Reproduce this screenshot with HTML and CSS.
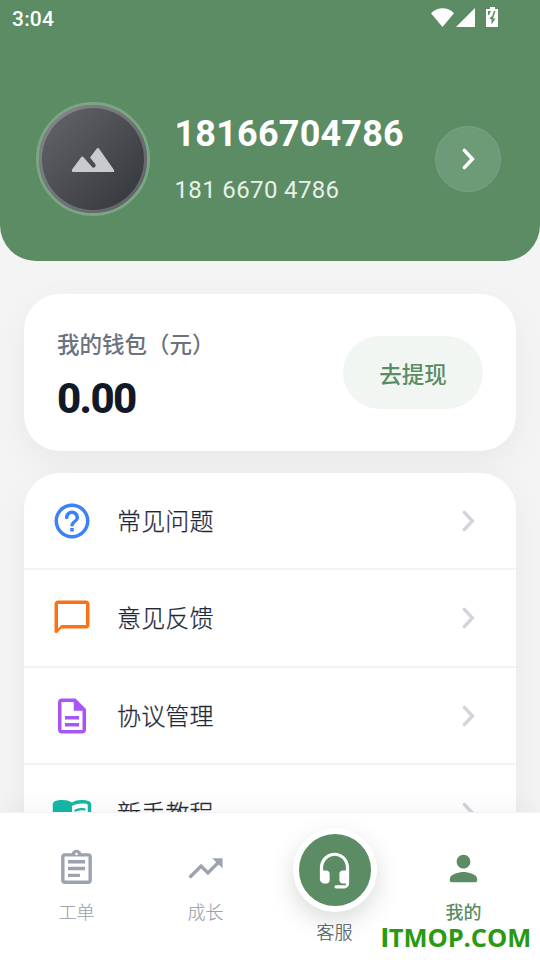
FILE: index.html
```html
<!DOCTYPE html>
<html lang="zh-CN">
<head>
<meta charset="utf-8">
<title>我的</title>
<link rel="stylesheet" href="styles.css">
</head>
<body>
<svg class="defs" width="0" height="0">
  <symbol id="chevron" viewBox="0 0 24 24"><path d="M9.900 7.100l4.600 4.900-4.600 4.900" fill="none" stroke="currentColor" stroke-width="2" stroke-linecap="round" stroke-linejoin="miter"/></symbol>
</svg>
<div class="screen">
  <header class="hero">
    <div class="status">
      <span class="time">3:04</span>
      <svg class="system" width="68" height="21" viewBox="0 0 68 21" fill="#fff">
        <path d="M0 6.2C6.5-.4 17-.4 23 6.2L11.500 20z"/>
        <path d="M44 1v19H25z"/>
        <path d="M59 0h5v2h3v18H55V2h4zM61.500 8.500l-3.500 3.500h2.500v5.500l4-6h-2.500l2.500-7.500h-1.500l-1.200 3zM57 4h3l-2 4h-1z" fill-rule="evenodd"/>
      </svg>
    </div>
    <div class="profile">
      <div class="avatar">
        <svg width="44" height="26" viewBox="0 0 44 26"><path d="M25.600 1.700 19 10.400l5.200 6.700a2.100 2.100 0 0 1-3.300 2.700L12.300 10Q11.300 8.900 10.300 10L1.200 22.200Q.2 25 2.300 25H42Q44 25 42.700 22.400L28.100 1.700Q26.800.4 25.600 1.700z"/></svg>
      </div>
      <div class="identity">
        <div class="name">18166704786</div>
        <div class="phone">181 6670 4786</div>
      </div>
      <div class="go"><svg width="42" height="42"><use href="#chevron"/></svg></div>
    </div>
  </header>
  <main class="content">
    <section class="card wallet">
      <div>
        <div class="wallet-label">我的钱包（元）</div>
        <div class="amount">0.00</div>
      </div>
      <div class="withdraw">去提现</div>
    </section>
    <section class="card menu">
      <div class="row">
        <svg class="icon blue" viewBox="0 0 24 24"><path d="M11 18h2v-2h-2v2zm1-16C6.480 2 2 6.480 2 12s4.480 10 10 10 10-4.480 10-10S17.520 2 12 2zm0 18c-4.410 0-8-3.590-8-8s3.590-8 8-8 8 3.590 8 8-3.590 8-8 8zm0-14c-2.210 0-4 1.790-4 4h0a1 1 0 0 0 2 0c0-1.100.900-2 2-2s2 .900 2 2c0 2-3 1.750-3 5h2c0-2.250 3-2.500 3-5 0-2.210-1.790-4-4-4z"/></svg>
        <span class="label">常见问题</span><svg class="arrow"><use href="#chevron"/></svg>
      </div>
      <div class="row">
        <svg class="icon orange" viewBox="0 0 24 24"><path d="M20 2H4c-1.100 0-2 .900-2 2v15.600c0 .900 1.080 1.340 1.710.710L6 18h14c1.100 0 2-.900 2-2V4c0-1.100-.900-2-2-2zm0 14H6l-2 2V4h16z"/></svg>
        <span class="label">意见反馈</span><svg class="arrow"><use href="#chevron"/></svg>
      </div>
      <div class="row">
        <svg class="icon purple" viewBox="0 0 24 24"><path d="M8 16h8v2H8zm0-4h8v2H8zm6-10H6c-1.100 0-2 .900-2 2v16c0 1.100.890 2 1.990 2H18c1.100 0 2-.900 2-2V8zm4 18H6V4h7v5h5z"/></svg>
        <span class="label">协议管理</span><svg class="arrow"><use href="#chevron"/></svg>
      </div>
      <div class="row">
        <svg class="icon teal" viewBox="0 0 24 24"><path d="M17.500 4.500c-1.950 0-4.050.400-5.500 1.500-1.450-1.100-3.550-1.500-5.500-1.500-1.450 0-2.990.220-4.280.790C1.490 5.620 1 6.330 1 7.140v11.280c0 1.300 1.220 2.260 2.480 1.940.980-.250 2.020-.360 3.020-.360 1.560 0 3.220.260 4.560.920.600.300 1.280.300 1.870 0 1.340-.670 3-.920 4.560-.920 1 0 2.040.110 3.020.360 1.260.330 2.480-.630 2.480-1.940V7.140c0-.810-.490-1.520-1.220-1.850-1.280-.570-2.820-.790-4.270-.790zM21 17.230c0 .630-.580 1.090-1.200.980-.750-.140-1.530-.200-2.300-.200-1.700 0-4.150.650-5.500 1.500V8c1.350-.850 3.800-1.500 5.500-1.500.920 0 1.830.090 2.700.280.460.100.800.510.800.980z"/><path d="M14 10.600q2.500-1 5.200-.700M14 13.500q2.500-1 5.200-.700" fill="none" stroke="currentColor" stroke-width="1.300" stroke-linecap="round"/></svg>
        <span class="label">新手教程</span><svg class="arrow"><use href="#chevron"/></svg>
      </div>
    </section>
  </main>
  <nav class="tabs">
    <div class="tab">
      <svg class="tab-icon" viewBox="0 0 24 24"><path d="M7 15h7v2H7zm0-4h10v2H7zm0-4h10v2H7zm12-4h-4.180C14.400 1.840 13.300 1 12 1s-2.400.840-2.820 2H5c-1.100 0-2 .900-2 2v14c0 1.100.900 2 2 2h14c1.100 0 2-.900 2-2V5c0-1.100-.900-2-2-2zm-7-.250a.750.750 0 1 1 0 1.500.750.750 0 0 1 0-1.500zM19 19H5V5h14z"/></svg>
      <span>工单</span>
    </div>
    <div class="tab">
      <svg class="tab-icon" viewBox="0 0 24 24"><path d="M16 6l2.290 2.290-4.880 4.880-4-4L2 16.590 3.410 18l6-6 4 4 6.300-6.290L22 12V6z"/></svg>
      <span>成长</span>
    </div>
    <div class="tab service">
      <div class="bubble"><svg width="39" height="39" viewBox="0 0 24 24"><path d="M11.400 1.020C6.620 1.330 3 5.520 3 10.310V17c0 1.660 1.340 3 3 3h1c1.100 0 2-.900 2-2v-4c0-1.100-.900-2-2-2H5v-1.710C5 6.450 7.960 3.110 11.790 3 15.760 2.890 19 6.060 19 10v2h-2c-1.100 0-2 .900-2 2v4c0 1.100.900 2 2 2h2v1h-6c-.550 0-1 .450-1 1s.450 1 1 1h5c1.660 0 3-1.340 3-3V10c0-5.170-4.360-9.320-9.600-8.980z"/></svg></div>
      <span>客服</span>
    </div>
    <div class="tab active">
      <svg class="tab-icon" viewBox="0 0 24 24"><path d="M12 12c2.210 0 4-1.790 4-4s-1.790-4-4-4-4 1.790-4 4 1.790 4 4 4zm0 2c-2.670 0-8 1.340-8 4v1c0 .550.450 1 1 1h14c.550 0 1-.450 1-1v-1c0-2.660-5.330-4-8-4z"/></svg>
      <span>我的</span>
    </div>
  </nav>
  <div class="watermark"><span class="plain-i">I</span>TMOP.COM</div>
</div>
</body>
</html>
```
FILE: styles.css
```css
* { box-sizing: border-box; }
body { margin: 0; font-family: Roboto, "Noto Sans CJK SC", sans-serif; }
svg { display: block; flex: none; }
.defs { position: absolute; }
.screen {
  position: relative;
  display: flex;
  flex-direction: column;
  width: 540px;
  height: 960px;
  overflow: hidden;
  background: #f4f4f4;
}
.hero {
  flex: none;
  height: 261px;
  border-radius: 0 0 36px 36px;
  background: #5b8c64;
  color: #fff;
}
.status {
  display: flex;
  justify-content: space-between;
  height: 36px;
  padding: 7px 41px 0 12px;
}
.time { font-size: 21px; line-height: 24px; font-weight: 500; letter-spacing: .2px; }
.profile { display: flex; align-items: center; height: 114px; margin-top: 66px; padding: 0 39px 0 36px; }
.avatar {
  display: flex;
  align-items: center;
  justify-content: center;
  flex: none;
  width: 114px;
  height: 114px;
  border: 3px solid #7ca583;
  border-radius: 50%;
  background: linear-gradient(135deg, #65676c, #303338);
  box-shadow: inset 0 0 0 3px rgba(255, 255, 255, .22);
  fill: #c9cacb;
}
.avatar svg { margin-top: 2px; }
.identity { flex: 1; padding-left: 24.5px; }
.name { font-size: 36px; line-height: 42px; font-weight: 700; letter-spacing: .2px; }
.phone { margin-top: 21px; margin-bottom: 1px; font-size: 24px; line-height: 28px; letter-spacing: .36px; color: #e9f0ea; }
.go {
  display: flex;
  align-items: center;
  justify-content: center;
  width: 66px;
  height: 66px;
  border: 1.5px solid #7ba383;
  border-radius: 50%;
  background: #6e9b77;
}
.content { flex: 1; min-height: 0; padding: 33px 24px 0; }
.card { border-radius: 36px; background: #fff; box-shadow: 0 12px 36px rgba(0, 0, 0, .05); }
.wallet { display: flex; align-items: center; justify-content: space-between; height: 157px; padding: 0 33px; }
.wallet-label { margin-top: 6px; font-size: 22.5px; line-height: 34px; font-weight: 500; color: #6b7280; }
.amount { margin-top: 12px; font-size: 42px; line-height: 50px; font-weight: 800; letter-spacing: -1.6px; color: #111827; }
.withdraw {
  width: 140px;
  height: 73px;
  border-radius: 37px;
  background: #f1f6f3;
  font-size: 22.5px;
  line-height: 79px;
  font-weight: 500;
  text-align: center;
  color: #5b8c64;
}
.menu { margin-top: 21.5px; overflow: hidden; }
.row { display: flex; align-items: center; height: 97.5px; padding: 1px 27px 0; border-bottom: 2px solid #f3f4f5; }
.icon { width: 42px; height: 42px; fill: currentColor; }
.blue { color: #3b82f6; }
.orange { color: #f97316; }
.purple { color: #a855f7; }
.teal { color: #14b8a6; }
.label {
  flex: 1;
  margin: 0 0 3px 24px;
  font-size: 24px;
  font-weight: 300;
  letter-spacing: .15px;
  -webkit-text-stroke: .25px currentColor;
  color: #1f2937;
}
.arrow { width: 42px; height: 42px; color: #d1d5db; }
.tabs {
  position: relative;
  display: flex;
  flex: none;
  height: 148px;
  padding: 0 12px;
  border-top: 1.5px solid #f0f2f5;
  background: #fff;
  box-shadow: 0 -6px 24px rgba(0, 0, 0, .035);
}
.tab {
  display: flex;
  flex: 1;
  flex-direction: column;
  align-items: center;
  padding-top: 35px;
  font-size: 18px;
  line-height: 26px;
  font-weight: 300;
  -webkit-text-stroke: .15px currentColor;
  color: #9ca3af;
}
.tab-icon { width: 41px; height: 41px; margin-bottom: 11px; fill: currentColor; }
.service { padding-top: 15px; color: #4b5563; }
.bubble {
  display: flex;
  align-items: center;
  justify-content: center;
  width: 84px;
  height: 84px;
  margin-bottom: 8px;
  border: 6px solid #fff;
  border-radius: 50%;
  background: #5b8c64;
  box-shadow: 0 9px 24px rgba(60, 85, 65, .2);
  fill: #fff;
}
.active { font-weight: 500; color: #5b8c64; -webkit-text-stroke: 0; }
.active span { line-height: 24px; margin-top: 1px; }
.watermark {
  position: absolute;
  left: 381px;
  top: 925px;
  font: 700 25.5px/24px "Open Sans", sans-serif;
  letter-spacing: -.05px;
  color: #2a9a12;
}
.plain-i { font-family: Roboto, sans-serif; font-weight: 900; }
```
